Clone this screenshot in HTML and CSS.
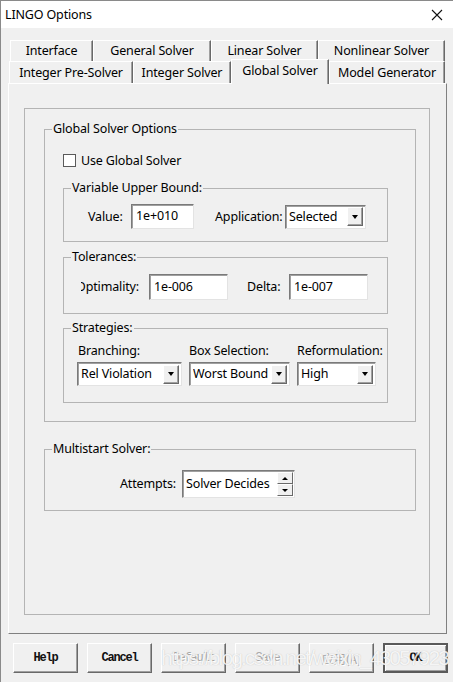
FILE: index.html
```html
<!DOCTYPE html>
<html>
<head>
<meta charset="utf-8">
<link rel="stylesheet" href="styles.css">
</head>
<body>
<div class="window">
  <div class="titlebar">
    <span class="title">LINGO Options</span>
    <svg class="close" width="12" height="12" viewBox="0 0 12 12"><path d="M1 1 L11 11 M11 1 L1 11" stroke="#111" stroke-width="1.1" fill="none"/></svg>
  </div>
  <div class="client">
    <div class="tabs">
      <div class="tabrow row1">
        <div class="tab t-interface">Interface</div>
        <div class="tab t-general">General Solver</div>
        <div class="tab t-linear">Linear Solver</div>
        <div class="tab t-nonlinear">Nonlinear Solver</div>
      </div>
      <div class="tabrow row2">
        <div class="tab t-presolver">Integer Pre-Solver</div>
        <div class="tab t-integer">Integer Solver</div>
        <div class="tab t-global selected">Global Solver</div>
        <div class="tab t-model">Model Generator</div>
      </div>
    </div>
    <div class="panel">
      <div class="frame">
        <fieldset class="group g-global">
          <legend>Global Solver Options</legend>
          <div class="gbody">
            <label class="check-row"><span class="checkbox"></span><span>Use Global Solver</span></label>
            <fieldset class="group g-vub">
              <legend>Variable Upper Bound:</legend>
              <div class="row vub-row">
                <span class="lbl l-value">Value:</span>
                <span class="edit e-value">1e+010</span>
                <span class="lbl l-app">Application:</span>
                <span class="combo c-app"><span class="ctext">Selected</span><span class="cbtn"><span class="tri"></span></span></span>
              </div>
            </fieldset>
            <fieldset class="group g-tol">
              <legend>Tolerances:</legend>
              <div class="row tol-row">
                <span class="clip"><span>Optimality:</span></span>
                <span class="edit e-opt">1e-006</span>
                <span class="lbl l-delta">Delta:</span>
                <span class="edit e-delta">1e-007</span>
              </div>
            </fieldset>
            <fieldset class="group g-strat">
              <legend>Strategies:</legend>
              <div class="strat-grid">
                <span class="slbl">Branching:</span>
                <span class="slbl s2">Box Selection:</span>
                <span class="slbl s3">Reformulation:</span>
                <span class="combo"><span class="ctext">Rel Violation</span><span class="cbtn"><span class="tri"></span></span></span>
                <span class="combo"><span class="ctext">Worst Bound</span><span class="cbtn"><span class="tri"></span></span></span>
                <span class="combo"><span class="ctext">High</span><span class="cbtn"><span class="tri"></span></span></span>
              </div>
            </fieldset>
          </div>
        </fieldset>
        <fieldset class="group g-multi">
          <legend>Multistart Solver:</legend>
          <div class="row multi-row">
            <span class="lbl l-attempts">Attempts:</span>
            <span class="spin"><span class="stext">Solver Decides</span><span class="sbtns"><span class="sbtn"><span class="tri up"></span></span><span class="sbtn"><span class="tri small"></span></span></span></span>
          </div>
        </fieldset>
      </div>
    </div>
    <div class="buttons">
      <span class="btn">Help</span>
      <span class="btn">Cancel</span>
      <span class="btn disabled">Default</span>
      <span class="btn disabled">Save</span>
      <span class="btn disabled cjk">应用(A)</span>
      <span class="btn default">OK</span>
    </div>
  </div>
  <div class="watermark">https://blog.csdn.net/weixin_43057923</div>
</div>
</body>
</html>
```

FILE: styles.css
```css
* { box-sizing: border-box; }
html, body { margin: 0; padding: 0; }
body {
  width: 453px;
  height: 682px;
  overflow: hidden;
  background: #f0f0f0;
  font-family: "Noto Sans", "Liberation Sans", sans-serif;
  font-size: 12px;
  letter-spacing: -0.15px;
  color: #000;
}
.window {
  position: relative;
  width: 453px;
  height: 682px;
  border-top: 1px solid #8a8a8a;
  border-left: 1px solid #8a8a8a;
  background: #f0f0f0;
}
.titlebar {
  height: 27px;
  background: #fff;
  display: flex;
  align-items: center;
  justify-content: space-between;
  padding: 0 10px 0 4px;
}
.title { font-size: 12.5px; line-height: 16px; }
.close { display: block; }

.client { padding-top: 12px; }
.tabrow { display: flex; }
.row1 { height: 21px; margin-left: 9px; }
.row2 { height: 22px; margin-left: 8px; align-items: flex-start; }
.tab {
  height: 100%;
  border-top: 1px solid #fff;
  border-left: 1px solid #fff;
  border-right: 1px solid #696969;
  box-shadow: inset -1px 0 0 #a0a0a0;
  display: flex;
  align-items: center;
  justify-content: center;
  font-size: 12.5px;
  white-space: nowrap;
  padding-bottom: 1px;
}
.t-interface { width: 83px; }
.t-general { width: 118px; }
.t-linear { width: 107px; }
.t-nonlinear { width: 127px; }
.t-presolver { width: 124px; }
.t-integer { width: 98px; }
.t-global { width: 98px; }
.t-model { width: 116px; }
.tab.selected {
  position: relative;
  z-index: 1;
  height: 25px;
  margin-top: -2px;
  background: #f0f0f0;
  padding-bottom: 3px;
}

.panel {
  margin-left: 7px;
  width: 439px;
  height: 551px;
  border-top: 1px solid #fff;
  border-left: 1px solid #fff;
  border-right: 1px solid #808080;
  border-bottom: 1px solid #808080;
  padding: 24px 0 0 15px;
}
.frame {
  width: 406px;
  height: 507px;
  border: 1px solid #b4b4b4;
  padding: 12px 0 0 19px;
}
fieldset.group {
  margin: 0;
  padding: 0;
  min-width: 0;
  border: 1px solid #b4b4b4;
}
fieldset.group > legend {
  margin-left: 7px;
  padding: 0 1px;
  font-size: 12.5px;
  line-height: 16px;
  white-space: nowrap;
}
.g-global { width: 372px; height: 301px; }
.gbody { padding-left: 18px; }
.check-row {
  display: flex;
  align-items: center;
  height: 16px;
  margin-top: 15px;
  font-size: 12.5px;
}
.checkbox {
  width: 13px;
  height: 13px;
  background: #fff;
  border: 1px solid #5a5a5a;
  margin-right: 5px;
}
.g-vub { width: 325px; height: 62px; margin-top: 12px !important; }
.g-tol { width: 325px; height: 65px; margin-top: 7px !important; }
.g-strat { width: 325px; height: 83px; margin-top: 6px !important; }
.g-multi { width: 372px; height: 70px; margin-top: 19px !important; }

.row { display: flex; align-items: center; font-size: 12.5px; white-space: nowrap; }
.vub-row { margin-top: 8px; padding-left: 24px; }
.lbl { line-height: 16px; flex: none; }
.l-value { width: 43px; }
.l-app { margin-left: 21px; width: 70px; }
.edit {
  flex: none;
  display: flex;
  align-items: center;
  background: #fff;
  border: 1px solid;
  border-color: #7a7a7a #e3e3e3 #e3e3e3 #7a7a7a;
  box-shadow: inset 1px 1px 0 #a0a0a0;
  padding: 0 0 2px 4px;
  font-size: 12.5px;
}
.e-value { width: 63px; height: 25px; }
.combo {
  flex: none;
  display: flex;
  align-items: center;
  justify-content: space-between;
  height: 24px;
  background: #fff;
  border: 1px solid;
  border-color: #7a7a7a #e3e3e3 #e3e3e3 #7a7a7a;
  box-shadow: inset 1px 1px 0 #a0a0a0;
  padding: 2px 2px 2px 3px;
  font-size: 12.5px;
  white-space: nowrap;
}
.c-app { width: 81px; }
.ctext { padding-bottom: 1px; overflow: hidden; }
.cbtn {
  flex: none;
  width: 16px;
  height: 19px;
  background: #f0f0f0;
  border: 1px solid;
  border-color: #fff #696969 #696969 #fff;
  box-shadow: inset -1px -1px 0 #a0a0a0;
  display: flex;
  align-items: center;
  justify-content: center;
}
.tri {
  width: 0;
  height: 0;
  border-left: 3.5px solid transparent;
  border-right: 3.5px solid transparent;
  border-top: 4px solid #000;
}
.tri.up { border-top: 0; border-bottom: 3px solid #000; border-left-width: 3px; border-right-width: 3px; }
.tri.small { border-top-width: 3px; border-left-width: 3px; border-right-width: 3px; }

.tol-row { margin-top: 9px; padding-left: 17px; }
.clip {
  flex: none;
  width: 68px;
  overflow: hidden;
  display: flex;
  justify-content: flex-end;
  padding-right: 10px;
  line-height: 16px;
}
.clip span { flex: none; }
.e-opt { width: 79px; height: 26px; }
.l-delta { margin-left: 19px; width: 42px; }
.e-delta { width: 79px; height: 26px; }

.strat-grid {
  display: grid;
  grid-template-columns: 105px 101px 79px;
  column-gap: 7px;
  row-gap: 3px;
  margin-top: 7px;
  padding-left: 13px;
  font-size: 12.5px;
  white-space: nowrap;
}
.slbl { line-height: 16px; padding-left: 1px; }
.s2, .s3 { padding-left: 0; }

.multi-row { margin-top: 13px; padding-left: 75px; }
.l-attempts { width: 62px; }
.spin {
  flex: none;
  display: flex;
  align-items: center;
  justify-content: space-between;
  width: 113px;
  height: 28px;
  background: #fff;
  border: 1px solid;
  border-color: #7a7a7a #e3e3e3 #e3e3e3 #7a7a7a;
  box-shadow: inset 1px 1px 0 #a0a0a0;
  padding: 1px 1px 1px 3px;
}
.stext { padding-bottom: 2px; }
.sbtns { display: flex; flex-direction: column; height: 100%; }
.sbtn {
  width: 16px;
  flex: 1;
  background: #f0f0f0;
  border: 1px solid;
  border-color: #fff #696969 #696969 #fff;
  display: flex;
  align-items: center;
  justify-content: center;
}

.buttons {
  display: flex;
  gap: 9px;
  margin: 9px 0 0 12px;
}
.btn {
  width: 65px;
  height: 30px;
  border: 1px solid;
  border-color: #fff #696969 #696969 #fff;
  box-shadow: inset -1px -1px 0 #a0a0a0;
  display: flex;
  align-items: center;
  justify-content: center;
  font-family: "Liberation Mono", monospace;
  font-size: 12px;
  letter-spacing: -1.2px;
  font-weight: bold;
  color: #111;
}
.btn.disabled { color: #a8a8a8; font-weight: normal; text-shadow: 1px 1px 0 #fff; }
.btn.cjk { font-family: "Noto Sans CJK SC", "Liberation Mono", monospace; letter-spacing: 0; font-size: 12px; }
.btn.default {
  border: 2px solid #5a5a5a;
  box-shadow: inset 1px 1px 0 #fff, inset -1px -1px 0 #a0a0a0;
}
.watermark {
  position: absolute;
  left: 160px;
  top: 645px;
  font-family: "Liberation Sans", sans-serif;
  font-size: 21px;
  letter-spacing: -1.9px;
  color: rgba(255, 255, 255, 0.85);
  text-shadow: 0 0 1px rgba(90, 90, 90, 0.35);
  white-space: nowrap;
  pointer-events: none;
}
```
